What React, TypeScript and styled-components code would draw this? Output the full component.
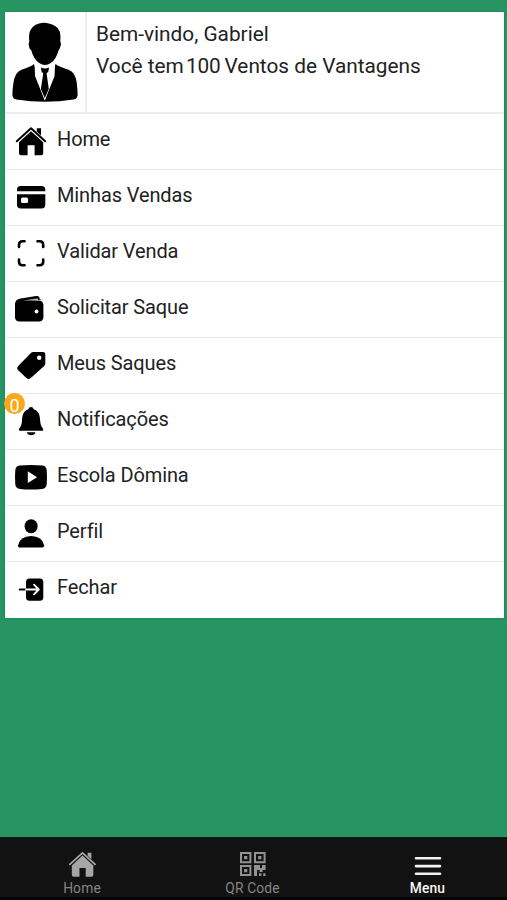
import React from "react";
import styled, { createGlobalStyle } from "styled-components";

const GlobalStyle = createGlobalStyle`
  * { box-sizing: border-box; }
  body { margin: 0; background: #269562; font-family: Roboto, "Liberation Sans", sans-serif; }
`;

const Screen = styled.div`
  display: flex;
  flex-direction: column;
  height: 900px;
  padding-top: 12px;
  background: #269562;
  overflow: hidden;
`;

const Panel = styled.main`
  margin: 0 3.5px 0 5px;
  height: 606px;
  background: #fff;
  color: #222;
  box-shadow: 0 0 2px #147b49;
`;

const Profile = styled.header`
  display: flex;
  height: 102px;
  border-bottom: 2px solid #ededed;
`;

const AvatarCell = styled.div`
  width: 82px;
  border-right: 2px solid #ededed;
`;

const Greeting = styled.div`
  padding: 6px 0 0 9px;
  font-size: 20.8px;
  line-height: 32px;
`;

const Line = styled.div`
  white-space: nowrap;
`;

const Points = styled.span`
  margin: 0 -1px 0 -3px;
  letter-spacing: -0.2px;
`;

const List = styled.nav`
  display: flex;
  flex-direction: column;
`;

const Row = styled.a`
  position: relative;
  display: flex;
  height: 56px;
  border-bottom: 1.5px solid #e9e9e9;

  &:last-child { border-bottom: 0; }
`;

const RowIcon = styled.svg`
  flex: none;
  width: 52px;
  height: 54px;
  color: #000;
`;

const Label = styled.span`
  padding-top: 11px;
  font-size: 20px;
  line-height: 28px;
  letter-spacing: -0.12px;
`;

const Badge = styled.span`
  position: absolute;
  left: -1px;
  top: -1px;
  width: 21px;
  height: 21px;
  border-radius: 50%;
  background: #faa819;
  color: #fff;
  font-size: 18px;
  line-height: 25px;
  text-align: center;
`;

const TabBar = styled.footer`
  display: flex;
  height: 63px;
  margin-top: auto;
  background: #121212;
  border-bottom: 3px solid #050505;
`;

const Tab = styled.a<{ $active?: boolean; $width: number }>`
  display: flex;
  flex: none;
  flex-direction: column;
  align-items: center;
  width: ${(p) => p.$width}px;
  padding-top: 13px;
  color: ${(p) => (p.$active ? "#f5f5f5" : "#858585")};
`;

const TabIcon = styled.svg`
  width: 32px;
  height: 28px;
`;

const TabLabel = styled.span<{ $bold?: boolean }>`
  margin-top: 2px;
  font-size: 13.8px;
  line-height: 17px;
  letter-spacing: 0.15px;
  font-weight: ${(p) => (p.$bold ? 500 : 400)};
`;

const HouseShape = () => (
  <>
    <path d="M11.8 28.2 26 15.2 40.2 28.2" fill="none" stroke="currentColor" strokeWidth="2" strokeLinecap="round" strokeLinejoin="round" />
    <path d="M31.8 15.2h4.2v7.2l-4.2-3.8Z" fill="currentColor" />
    <path d="M26 18.3 38.2 29.3V40.2q0 2-2 2H29.6V32.2H22.6V42.2H16q-2 0-2-2V29.3Z" fill="currentColor" />
  </>
);

const items = [
  { label: "Home", icon: <HouseShape /> },
  {
    label: "Minhas Vendas",
    icon: (
      <>
        <path d="M12 22.3V20.7Q12 17 15.7 17H36.6Q40.3 17 40.3 20.7V22.3Z" />
        <path fillRule="evenodd" d="M12 25.2H40.3V35.8Q40.3 39.5 36.6 39.5H15.7Q12 39.5 12 35.8ZM17.6 28.6Q16 28.6 16 30.2V32.5Q16 34.1 17.6 34.1H21.5Q23.1 34.1 23.1 32.5V30.2Q23.1 28.6 21.5 28.6Z" />
      </>
    ),
  },
  {
    label: "Validar Venda",
    icon: <path fill="none" stroke="#000" strokeWidth="2.6" strokeLinecap="round" d="M19.5 16.3H17.5Q14 16.3 14 19.8V22M32.5 16.3H34.5Q38.2 16.3 38.2 19.8V22M14 34.5V36.7Q14 40.2 17.5 40.2H19.5M38.2 34.5V36.7Q38.2 40.2 34.5 40.2H32.5" />,
  },
  {
    label: "Solicitar Saque",
    icon: (
      <>
        <path d="M10.2 23Q10.2 18.6 14.4 17.8L31 15.1Q34.6 14.5 34.8 18.3H38Z" />
        <rect x="10" y="19.5" width="28.4" height="21" rx="4.3" />
        <path d="M18 19.5 32 17.6Q33.2 17.6 33.4 19.5Z" fill="#bbb" />
        <circle cx="31.5" cy="30.5" r="1.9" fill="#fff" />
      </>
    ),
  },
  {
    label: "Meus Saques",
    icon: (
      <path fillRule="evenodd" d="M28.2 15H38.1Q40.3 15 40.3 17.2V26.6Q40.3 28 39.2 29.1L25.8 41.1Q23.6 42.9 21.4 40.9L13.2 33.2Q11.2 31 13.2 28.9L25.9 16Q26.9 15 28.2 15ZM34.2 18.6A2.2 2.2 0 1 0 34.2 23A2.2 2.2 0 1 0 34.2 18.6Z" />
    ),
  },
  {
    label: "Notificações",
    icon: (
      <>
        <path d="M26 14Q28.1 14 28.7 16.2Q34.5 18 35 25.5Q35.2 32 37 34.2Q39 36.5 38 37.4Q37.6 37.8 36.8 37.8H15.3Q13.5 37.8 13.8 36.3Q14 35.6 15.2 34.2Q17 32 17.1 25.5Q17.5 18 23.3 16.2Q23.9 14 26 14Z" />
        <path d="M21.8 39.3H30.5Q29.6 42.2 26.2 42.2Q22.8 42.2 21.8 39.3Z" />
      </>
    ),
  },
  {
    label: "Escola Dômina",
    icon: (
      <>
        <path d="M15 16.4Q26 15.4 37 16.4Q41.3 16.6 41.7 21Q42.3 28 41.7 35.3Q41.3 39.6 37 40Q26 41 15 40Q10.7 39.6 10.3 35.3Q9.7 28 10.3 21Q10.7 16.6 15 16.4Z" />
        <path d="M22.8 22.3V34L32.1 28.2Z" fill="#fff" />
      </>
    ),
  },
  {
    label: "Perfil",
    icon: (
      <>
        <ellipse cx="26.1" cy="21.3" rx="6.5" ry="7" />
        <path d="M15 42.6Q12.7 42.6 13.1 40.2Q15 31.2 26.1 31Q37.2 31.2 39.1 40.2Q39.4 42.6 37.2 42.6Z" />
      </>
    ),
  },
  {
    label: "Fechar",
    icon: (
      <>
        <rect x="21" y="17.4" width="17.3" height="22.3" rx="3.5" />
        <path d="M14.7 28.5H21" fill="none" stroke="#000" strokeWidth="1.9" strokeLinecap="round" />
        <path d="M21 28.5H33M29 23.6 33.8 28.5 29 33.4" fill="none" stroke="#fff" strokeWidth="1.8" strokeLinecap="round" strokeLinejoin="round" />
      </>
    ),
  },
];

const Avatar = () => (
  <svg width="80" height="100" viewBox="5 12 80 100">
    <path d="M43 22.7Q50 22.6 55.5 26.3Q61.5 29.5 60.3 41.5Q61.5 43 60.4 46.5Q59.7 49.5 58.6 50.2Q56.5 58.8 50.8 63Q45 67 39.2 63Q33.3 58.8 31.3 50.2Q29.6 49.8 29 46.5Q28.2 43.3 29.3 41.5Q28.4 33.5 30.8 29.5Q34.5 23.3 43 22.7Z" />
    <path d="M34 64 44.8 100.5 55.5 64Q59 66.8 68.5 69.8Q75.5 72.2 76.8 83Q77.6 90 77.6 95Q77.6 98.5 73.5 99.6Q45 104 16.5 99.6Q12.4 98.5 12.4 95Q12.4 90 13.4 83Q14.8 72.2 21.5 69.8Q31 66.8 34 64Z" />
    <path d="M34.6 64.2Q39 68.3 44.8 68.3Q50.6 68.3 55 64.2L54.6 76 44.8 100.5 35 76Z" fill="#fff" />
    <path d="M41 67.6Q45 69.3 49 67.6L48.4 71.5 46.6 73.5 48.8 89 44.8 98 40.9 89 43.2 73.5 41.5 71.5Z" />
  </svg>
);

const QrIcon = () => (
  <TabIcon viewBox="-3 0 32 28">
    <path fill="none" stroke="#929292" strokeWidth="2" d="M1 3h9.4v9.2H1ZM15 3h9.6v9.2H15ZM1 16h9.4v9H1Z" />
    <path fill="#929292" d="M4.1 6h3.2v3.2H4.1ZM18.2 6h3.2v3.2h-3.2ZM4.1 19h3.2v3.2H4.1ZM14 15h6v3h2v-3h3.6v5h-3v2h-3v-2h-2.5v6H14ZM19 23.2h2.4V26H19ZM23.2 23.2h2.4V26h-2.4Z" />
  </TabIcon>
);

export default function App() {
  return (
    <>
      <GlobalStyle />
      <Screen>
        <Panel>
          <Profile>
            <AvatarCell><Avatar /></AvatarCell>
            <Greeting>
              <Line>Bem-vindo, Gabriel</Line>
              <Line>Você tem <Points>100</Points> Ventos de Vantagens</Line>
            </Greeting>
          </Profile>
          <List>
            {items.map((item) => (
              <Row key={item.label}>
                <RowIcon viewBox="0 1 52 54">{item.icon}</RowIcon>
                <Label>{item.label}</Label>
                {item.label === "Notificações" && <Badge>0</Badge>}
              </Row>
            ))}
          </List>
        </Panel>
        <TabBar>
          <Tab $width={164}>
            <TabIcon viewBox="9.7 12 31.5 31.5" color="#a6a6a6"><HouseShape /></TabIcon>
            <TabLabel>Home</TabLabel>
          </Tab>
          <Tab $width={177}>
            <QrIcon />
            <TabLabel>QR Code</TabLabel>
          </Tab>
          <Tab $width={173} $active>
            <TabIcon viewBox="0 0 32 28">
              <path stroke="#f2f2f2" strokeWidth="2.6" strokeLinecap="round" d="M4 8.3H28M4 16.1H28M4 23.8H28" />
            </TabIcon>
            <TabLabel $bold>Menu</TabLabel>
          </Tab>
        </TabBar>
      </Screen>
    </>
  );
}
